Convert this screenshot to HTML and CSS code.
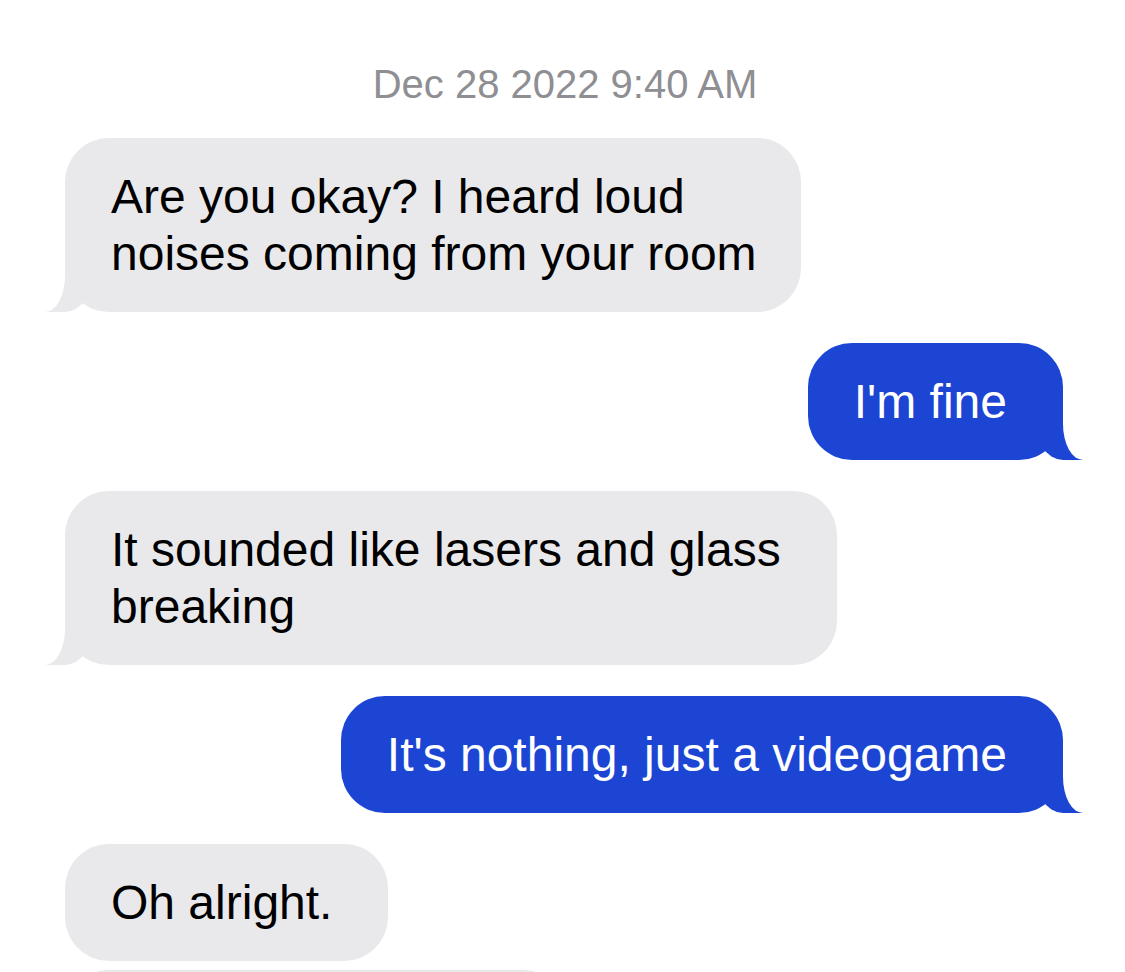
FILE: index.html
```html
<!DOCTYPE html>
<html lang="en">
<head>
<meta charset="utf-8">
<title>Messages</title>
<link rel="stylesheet" href="styles.css">
</head>
<body>
<main class="thread">
  <div class="timestamp">Dec 28 2022 9:40 AM</div>
  <div class="row row--them">
    <div class="bubble bubble--them bubble--tail bubble--tight">Are you okay? I heard loud<br>noises coming from your room</div>
  </div>
  <div class="row row--me">
    <div class="bubble bubble--me bubble--tail">I'm fine</div>
  </div>
  <div class="row row--them">
    <div class="bubble bubble--them bubble--tail">It sounded like lasers and glass<br>breaking</div>
  </div>
  <div class="row row--me">
    <div class="bubble bubble--me bubble--tail">It's nothing, just a videogame</div>
  </div>
  <div class="row row--them">
    <div class="bubble bubble--them">Oh alright.</div>
  </div>
  <div class="row row--them row--grouped">
    <div class="bubble bubble--them bubble--peek"></div>
  </div>
</main>
</body>
</html>
```
FILE: styles.css
```css
html, body {
  margin: 0;
  padding: 0;
  background: #ffffff;
  overflow: hidden;
}

body {
  font-family: "Liberation Sans", Arial, sans-serif;
  color: #000000;
}

.thread {
  display: flex;
  flex-direction: column;
  padding: 61px 62px 0 65px;
}

.timestamp {
  font-size: 40px;
  line-height: 46px;
  color: #8e8e93;
  text-align: center;
  margin-left: 2px;
  margin-bottom: 31px;
}

.row {
  display: flex;
  margin-bottom: 31px;
}

.row--them {
  justify-content: flex-start;
}

.row--me {
  justify-content: flex-end;
}

.row--grouped {
  margin-top: -22px;
}

.bubble {
  position: relative;
  font-size: 48px;
  line-height: 57px;
  padding: 30px 56px 30px 46px;
  border-radius: 44px;
  white-space: nowrap;
}

.bubble--tight {
  padding-right: 44px;
}

.bubble--them {
  background: #e9e9eb;
  color: #000000;
}

.bubble--me {
  background: #1c45d4;
  color: #ffffff;
}

.bubble--peek {
  width: 400px;
  height: 57px;
}

.bubble--tail::before,
.bubble--tail::after {
  content: "";
  position: absolute;
  bottom: 0;
}

.bubble--them.bubble--tail::before {
  left: -20px;
  width: 50px;
  height: 45px;
  background: #e9e9eb;
  border-bottom-right-radius: 30px 45px;
}

.bubble--them.bubble--tail::after {
  left: -40px;
  width: 40px;
  height: 50px;
  background: #ffffff;
  border-bottom-right-radius: 20px 36px;
}

.bubble--me.bubble--tail::before {
  right: -20px;
  width: 50px;
  height: 45px;
  background: #1c45d4;
  border-bottom-left-radius: 30px 45px;
}

.bubble--me.bubble--tail::after {
  right: -40px;
  width: 40px;
  height: 50px;
  background: #ffffff;
  border-bottom-left-radius: 20px 36px;
}
```
